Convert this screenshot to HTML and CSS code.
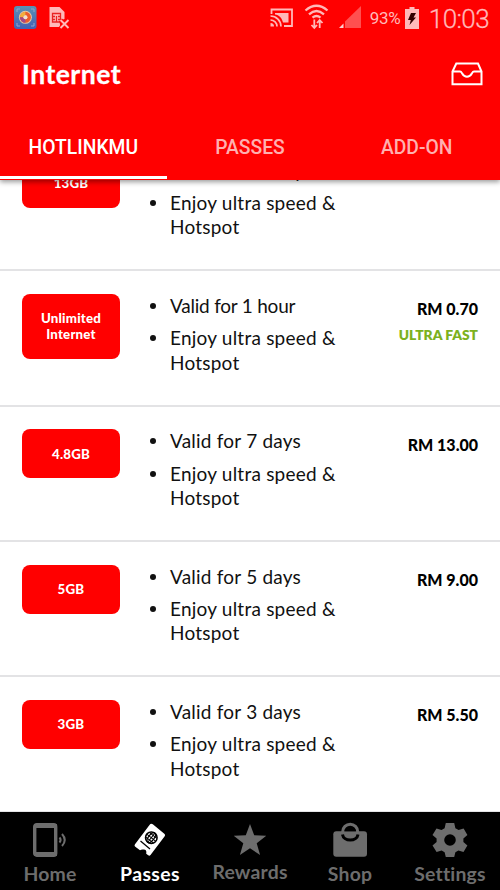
FILE: index.html
```html
<!DOCTYPE html>
<html lang="en">
<head>
<meta charset="utf-8">
<title>Internet</title>
<link rel="stylesheet" href="styles.css">
</head>
<body>
<div class="screen">
  <header class="header">
    <div class="status">
      <svg class="status-left" width="60" height="24" viewBox="0 0 60 24">
        <defs><linearGradient id="app" x1="0" y1="0" x2="0" y2="1"><stop offset="0" stop-color="#5b92b4"/><stop offset="1" stop-color="#4260b5"/></linearGradient></defs>
        <rect x="0" y="0" width="22.5" height="23" rx="3" fill="url(#app)"/>
        <path d="M3 6V3h3M17 3h3v3M20 17v3h-3M6 20H3v-3" fill="none" stroke="#8fa5cc" stroke-width="1"/>
        <circle cx="11.4" cy="11.3" r="6.5" fill="#e6c9a6"/>
        <circle cx="11.4" cy="11.3" r="3.8" fill="none" stroke="#ee5b2b" stroke-width="3.5"/>
        <path d="M7.6 11.3a3.8 3.8 0 0 1 3.8-3.8" fill="none" stroke="#f3ae3e" stroke-width="3.5"/>
        <path d="M11.4 15.1a3.8 3.8 0 0 1-3.8-3.8" fill="none" stroke="#a34987" stroke-width="3.5"/>
        <circle cx="11.4" cy="11.3" r="2" fill="#f5dfd0"/>
        <path d="M35.5 1h10l5 5v7l-3 1-2 2 1 5H35.500z" fill="#ffb9b9"/>
        <path d="M38.500 7.500h8v8.500h-8zM38.500 10.500h2.500M38.500 13.500h2.500M44 10.500h2.500M44 13.500h2.500M42.500 10v6" fill="none" stroke="#e92323" stroke-width="1.300"/>
        <path d="M46.500 14l8 8M54.500 14l-8 8" stroke="#f00" stroke-width="4"/>
        <path d="M46.500 14l8 8M54.500 14l-8 8" stroke="#ffb9b9" stroke-width="1.900"/>
      </svg>
      <div class="status-right">
        <svg width="96" height="30" viewBox="270 3 96 30" fill="none" stroke="#ffb9b9">
          <path d="M272.500 14V9.500h20.500v16.500h-8" stroke-width="1.800"/>
          <path d="M276 13h13.500v9.500h-5.500c-1-4.500-4-7.500-8-8z" fill="#ffb9b9" stroke="none"/>
          <path d="M271.500 16a10.500 10.500 0 0 1 10.500 10.500M271.500 20a6.500 6.500 0 0 1 6.500 6.500" stroke-width="1.700"/>
          <path d="M271.500 23a3.500 3.500 0 0 1 3.500 3.500h-3.500z" fill="#ffb9b9" stroke="none"/>
          <path d="M306.500 10.500q11-9.500 22 0M310 14.300q7.500-6.500 15 0M313.500 17.700q4-3.500 8 0" stroke-width="2.300"/>
          <path d="M315.300 19.500v8M312.500 25l2.800 3 2.700-3M320.700 28v-8M318 23l2.700-3 2.800 3" stroke-width="1.800"/>
          <path d="M346 28V21.500L362 6v22z" fill="#ff5050" stroke="none"/>
          <path d="M340 28l4.500-4.500V28z" fill="#ffd0d0" stroke="none"/>
        </svg>
        <span class="battery-text">93%</span>
        <svg class="battery" width="14" height="22" viewBox="0 0 14 22"><path d="M4.500 0h5v2H14v20H0V2h4.500z" fill="#ffb9b9"/><path d="M6 6h5l-2.500 4.500H11L4.500 18l1.300-5H3z" fill="#300"/></svg>
        <span class="clock">10:03</span>
      </div>
    </div>
    <div class="title-bar">
      <h1 class="title">Internet</h1>
      <svg width="32" height="24" viewBox="0 0 32 24" fill="none" stroke="#fff" stroke-width="2"><path d="M1.500 9.500 5.300 1.500H27L30.500 9.500V22.300H1.500zM1.500 9.500H9c2.500 0 2 5.200 7 5.200s4.500-5.200 7-5.200h7.500"/></svg>
    </div>
    <nav class="tabs">
      <span class="tab tab-active">HOTLINKMU</span>
      <span class="tab">PASSES</span>
      <span class="tab">ADD-ON</span>
    </nav>
  </header>
  <main class="list">
    <div class="rows">
      <section class="row">
        <div class="badge">13GB</div>
        <ul class="details"><li>Valid for 30 days</li><li>Enjoy ultra speed &amp;<br>Hotspot</li></ul>
      </section>
      <section class="row">
        <div class="badge">Unlimited<br>Internet</div>
        <ul class="details"><li class="tight">Valid for 1 hour</li><li>Enjoy ultra speed &amp;<br>Hotspot</li></ul>
        <div class="price"><span>RM 0.70</span><span class="fast">ULTRA FAST</span></div>
      </section>
      <section class="row">
        <div class="badge">4.8GB</div>
        <ul class="details"><li>Valid for 7 days</li><li>Enjoy ultra speed &amp;<br>Hotspot</li></ul>
        <div class="price"><span>RM 13.00</span></div>
      </section>
      <section class="row">
        <div class="badge">5GB</div>
        <ul class="details"><li>Valid for 5 days</li><li>Enjoy ultra speed &amp;<br>Hotspot</li></ul>
        <div class="price"><span>RM 9.00</span></div>
      </section>
      <section class="row">
        <div class="badge">3GB</div>
        <ul class="details"><li>Valid for 3 days</li><li>Enjoy ultra speed &amp;<br>Hotspot</li></ul>
        <div class="price"><span>RM 5.50</span></div>
      </section>
    </div>
  </main>
  <footer class="nav">
    <div class="nav-item">
      <svg viewBox="0 0 40 36"><rect x="4.700" y="2.700" width="21" height="30.500" rx="2" fill="none" stroke="currentColor" stroke-width="3.400"/><path d="M4 4h23M4 32h23" stroke="currentColor" stroke-width="4"/><path d="M29.500 15.500q2.200 2.500 0 5M32 12q5.500 6 0 12" fill="none" stroke="currentColor" stroke-width="2"/></svg>
      <span>Home</span>
    </div>
    <div class="nav-item nav-active">
      <svg viewBox="0 0 40 36"><path d="M19.500 3c1-1.500 2-1.700 3.300-.7L34 11.500c1.300 1 1.300 2 .5 3L20.500 33q-1 1.200-2.300.2l-2-1.500q1-5-3.700-4.200-1.500.3-2.500.7L5 24.500q-1-1 0-2.300z" fill="currentColor"/><g fill="none" stroke="#000" stroke-width="1.200"><circle cx="21.300" cy="15.700" r="5.800" stroke-width="1.500"/><g transform="rotate(38 21.300 15.700)"><ellipse cx="21.300" cy="15.700" rx="2.800" ry="5.800"/><path d="M15.500 15.700h11.600M21.300 9.900v11.600M16.500 12.800h9.600M16.500 18.600h9.600" stroke-width="1"/></g><path d="M10.500 19l9.500 8"/></g></svg>
      <span>Passes</span>
    </div>
    <div class="nav-item nav-rewards">
      <svg viewBox="0 0 40 36"><path d="M20 2l4.200 11.300 12.100.4-9.600 7.500 3.400 11.800L20 26.300 9.900 33l3.400-11.800-9.600-7.500 12.100-.4z" fill="currentColor"/></svg>
      <span>Rewards</span>
    </div>
    <div class="nav-item">
      <svg viewBox="0 0 40 36"><rect x="3.300" y="9.300" width="33.700" height="25.500" rx="3" fill="currentColor"/><circle cx="20.200" cy="9.700" r="7.500" fill="none" stroke="currentColor" stroke-width="3"/><path d="M14.500 9.300a5.800 5.200 0 0 1 11.400 0z" fill="#000"/><path d="M12.500 12.500a7.800 6.300 0 0 0 15.500 0" fill="none" stroke="#000" stroke-width="3"/></svg>
      <span>Shop</span>
    </div>
    <div class="nav-item">
      <svg viewBox="0 0 40 36"><path fill-rule="evenodd" d="M15.800 1h8.400l1.200 5.200 3.200 1.800 5-1.600 3.800 6.500-4 3.700v3.300l4 3.600-3.900 6.600-5.100-1.600-3 1.800-1.200 4.700h-8.400l-1.200-4.700-3-1.800-5 1.600-4.100-6.600 4.100-3.600v-3.300l-4.100-3.700 4-6.500 5 1.600 3.100-1.800zM20 12.200a5.800 5.800 0 1 0 0 11.600 5.800 5.800 0 1 0 0-11.600z" fill="currentColor"/></svg>
      <span>Settings</span>
    </div>
  </footer>
</div>
</body>
</html>
```
FILE: styles.css
```css
* { box-sizing: border-box; }
body { margin: 0; background: #fff; font-family: Lato, "Liberation Sans", sans-serif; color: #111; font-variant-ligatures: none; }
.screen { width: 500px; height: 890px; display: flex; flex-direction: column; overflow: hidden; }
.header { height: 179.5px; flex: none; background: #f00; color: #fff; display: flex; flex-direction: column; box-shadow: 0 2px 5px rgba(0,0,0,.4); z-index: 1; }
.status { height: 36px; display: flex; justify-content: space-between; padding: 0 11px 0 14px; font-family: Roboto, sans-serif; color: #ffb9b9; }
.status-left { margin-top: 6px; }
.status-right { display: flex; align-items: center; }
.battery-text { font-size: 17px; margin-left: 5px; width: 31px; letter-spacing: -.4px; }
.battery { margin: 0 10px 0 4px; }
.clock { font-size: 26px; font-weight: 300; letter-spacing: -.6px; line-height: 36px; -webkit-text-stroke: .3px #ffb9b9; padding-top: 2px; }
.title-bar { height: 78px; display: flex; align-items: center; justify-content: space-between; padding: 0 17px 2px 22px; }
.title { margin: 0; font-size: 26.5px; font-weight: 700; line-height: 32px; letter-spacing: .5px; -webkit-text-stroke: .3px #fff; }
.tabs { flex: 1; display: grid; grid-template-columns: repeat(3, 1fr); font-family: Roboto, sans-serif; font-weight: 500; font-size: 19.3px; color: #ffb0b0; text-align: center; }
.tab { line-height: 67px; height: 64.5px; }
.tab-active { color: #fff; border-bottom: 3px solid #fff; }
.list { flex: 1; min-height: 0; overflow: hidden; }
.rows { margin-top: -43.5px; }
.row { height: 135.35px; display: grid; grid-template-columns: 98px 1fr 110px; padding: 22.5px 22px 0; border-bottom: 2px solid #e3e3e5; }
.badge { justify-self: stretch; align-self: start; background: #f00; color: #fff; border-radius: 8px; padding: 16.5px 0; text-align: center; font-size: 13.3px; font-weight: 900; line-height: 16px; letter-spacing: .2px; }
.details { margin: 0; padding: 0 0 0 50px; list-style: none; font-size: 19px; line-height: 24.2px; white-space: nowrap; letter-spacing: .22px; }
.details li { margin-bottom: 8.3px; }
.details li::before { content: ""; float: left; width: 6px; height: 6px; border-radius: 50%; background: #111; margin: 9px 0 0 -20px; }
.tight { letter-spacing: -.22px; }
.price { display: flex; flex-direction: column; align-items: flex-end; padding-top: 4.5px; font-size: 16px; line-height: 22px; font-weight: 900; color: #000; white-space: nowrap; }
.fast { color: #7cb11e; font-size: 13.8px; line-height: 20px; margin-top: 4.5px; font-weight: 800; }
.nav { height: 78px; flex: none; background: #000; color: #6d6d6d; display: grid; grid-template-columns: repeat(5, 1fr); z-index: 1; }
.nav-item { display: flex; flex-direction: column; align-items: center; padding-top: 10px; font-weight: 700; font-size: 19.4px; line-height: 24px; gap: 4px; letter-spacing: .2px; }
.nav-item svg { width: 40px; height: 36px; }
.nav-rewards { gap: 2px; }
.nav-active { color: #fff; letter-spacing: .4px; }
```
